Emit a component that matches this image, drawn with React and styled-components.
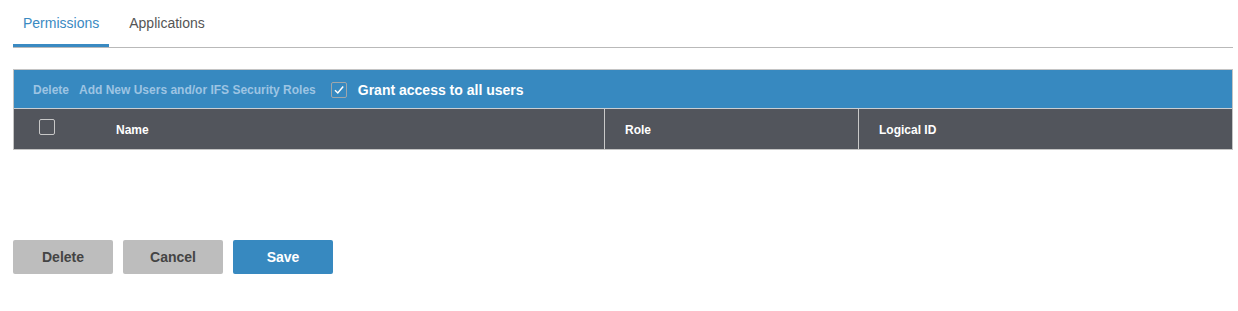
import styled, { createGlobalStyle } from 'styled-components'

const GlobalStyle = createGlobalStyle`
  body {
    margin: 0;
    background: #fff;
    font-family: "Liberation Sans", Arial, sans-serif;
  }
`

const Page = styled.div`
  padding: 0 5px 0 13px;
`

const TabBar = styled.div`
  display: flex;
  gap: 10px;
  border-bottom: 1px solid #b9b9b9;
  height: 47px;
`

const Tab = styled.div`
  padding: 15px 10px 0;
  font-size: 14px;
  color: ${(p) => (p.$active ? '#3a8ac2' : '#555')};
  border-bottom: 3px solid ${(p) => (p.$active ? '#3a8ac2' : 'transparent')};
  height: 29px;
  margin-bottom: -1px;
  cursor: pointer;
`

const Grid = styled.div`
  margin-top: 21px;
  border: 1px solid #c4c4c4;
`

const Toolbar = styled.div`
  display: flex;
  align-items: center;
  box-sizing: border-box;
  height: 39px;
  padding: 2px 0 0 19px;
  background: #3789c0;
  border-bottom: 1px solid #c9ced3;
`

const ToolLink = styled.span`
  font-size: 12px;
  font-weight: bold;
  color: #9dc4e3;
  margin-right: 10px;
`

const Check = styled.span`
  display: inline-flex;
  align-items: center;
  justify-content: center;
  width: 14px;
  height: 14px;
  border: 1px solid ${(p) => p.$border || '#d8d8d8'};
  border-radius: 2px;
`

const GrantLabel = styled.span`
  margin-left: 11px;
  font-size: 14px;
  font-weight: bold;
  color: #fff;
`

const HeaderRow = styled.div`
  display: grid;
  grid-template-columns: 82px 508px 254px 1fr;
  height: 40px;
  background: #52555c;
`

const HeadCell = styled.div`
  display: flex;
  align-items: center;
  padding: 1px 0 0 ${(p) => p.$pad || 20}px;
  font-size: 12px;
  font-weight: bold;
  color: #fff;
  border-left: ${(p) => (p.$divider ? '1px solid #c9c9c9' : 'none')};
`

const Actions = styled.div`
  display: flex;
  gap: 10px;
  margin-top: 90px;
`

const Button = styled.button`
  width: 100px;
  height: 34px;
  border: none;
  border-radius: 2px;
  font-family: inherit;
  font-size: 14px;
  font-weight: bold;
  color: ${(p) => (p.$primary ? '#fff' : '#444')};
  background: ${(p) => (p.$primary ? '#3789c0' : '#bdbdbd')};
  cursor: pointer;
`

const CheckMark = () => (
  <svg width="12" height="12" viewBox="0 0 12 12">
    <path d="M2 6.3 L4.8 9 L10.2 2.6" fill="none" stroke="#fff" strokeWidth="1.5" />
  </svg>
)

const App = () => {
  return (
    <Page>
      <GlobalStyle />
      <TabBar>
        <Tab $active>Permissions</Tab>
        <Tab>Applications</Tab>
      </TabBar>

      <Grid>
        <Toolbar>
          <ToolLink>Delete</ToolLink>
          <ToolLink>Add New Users and/or IFS Security Roles</ToolLink>
          <Check $border="#a0a6aa" style={{ marginLeft: 5 }}>
            <CheckMark />
          </Check>
          <GrantLabel>Grant access to all users</GrantLabel>
        </Toolbar>
        <HeaderRow>
          <HeadCell $pad={25}>
            <Check $border="#c8c8c8" style={{ marginTop: -6 }} />
          </HeadCell>
          <HeadCell>Name</HeadCell>
          <HeadCell $divider>Role</HeadCell>
          <HeadCell $divider>Logical ID</HeadCell>
        </HeaderRow>
      </Grid>

      <Actions>
        <Button>Delete</Button>
        <Button>Cancel</Button>
        <Button $primary>Save</Button>
      </Actions>
    </Page>
  )
}

export default App
